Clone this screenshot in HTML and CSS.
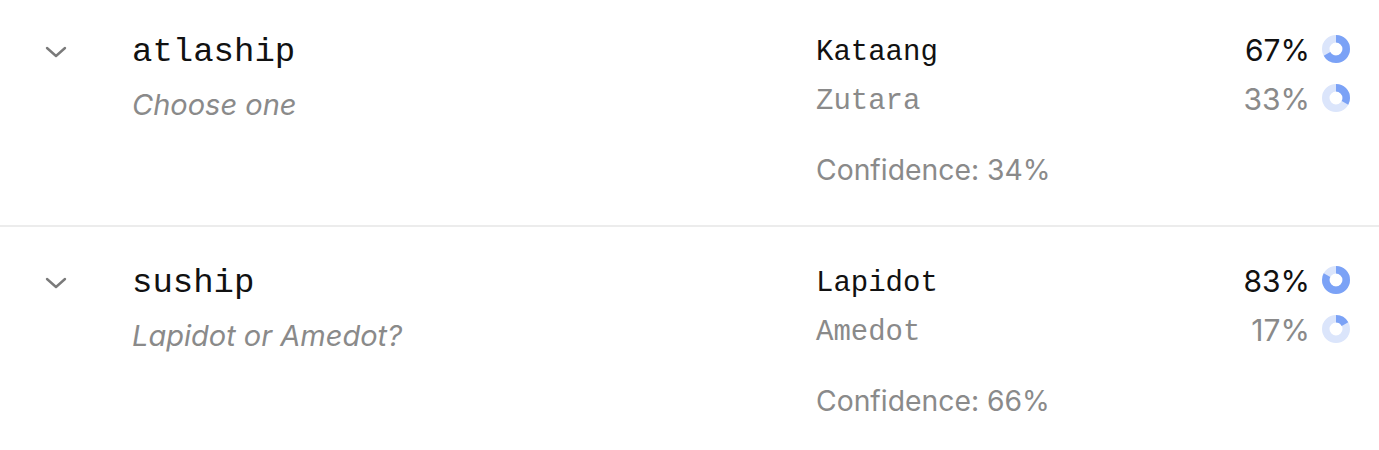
FILE: index.html
```html
<!DOCTYPE html>
<html>
<head>
<meta charset="utf-8">
<link rel="stylesheet" href="styles.css">
</head>
<body>
<div class="list">
  <div class="row">
    <div class="chev"><svg width="22" height="14" viewBox="0 0 22 14"><path d="M2 3 L11 11 L20 3" fill="none" stroke="#7a7a7a" stroke-width="2.4" stroke-linecap="round" stroke-linejoin="round"/></svg></div>
    <div class="main">
      <div class="title">atlaship</div>
      <div class="sub">Choose one</div>
    </div>
    <div class="side">
      <div class="opt top">
        <span class="name">Kataang</span>
        <span class="pct">67%</span>
        <svg class="donut" viewBox="0 0 28 28"><circle cx="14" cy="14" r="10.25" fill="none" stroke="#dbe5fb" stroke-width="7.5"/><circle cx="14" cy="14" r="10.25" fill="none" stroke="#7ba2f6" stroke-width="7.5" pathLength="100" stroke-dasharray="67 100" transform="rotate(-90 14 14)"/></svg>
      </div>
      <div class="opt">
        <span class="name">Zutara</span>
        <span class="pct">33%</span>
        <svg class="donut" viewBox="0 0 28 28"><circle cx="14" cy="14" r="10.25" fill="none" stroke="#dbe5fb" stroke-width="7.5"/><circle cx="14" cy="14" r="10.25" fill="none" stroke="#7ba2f6" stroke-width="7.5" pathLength="100" stroke-dasharray="33 100" transform="rotate(-90 14 14)"/></svg>
      </div>
      <div class="conf">Confidence: 34%</div>
    </div>
  </div>
  <div class="row">
    <div class="chev"><svg width="22" height="14" viewBox="0 0 22 14"><path d="M2 3 L11 11 L20 3" fill="none" stroke="#7a7a7a" stroke-width="2.4" stroke-linecap="round" stroke-linejoin="round"/></svg></div>
    <div class="main">
      <div class="title">suship</div>
      <div class="sub">Lapidot or Amedot?</div>
    </div>
    <div class="side">
      <div class="opt top">
        <span class="name">Lapidot</span>
        <span class="pct">83%</span>
        <svg class="donut" viewBox="0 0 28 28"><circle cx="14" cy="14" r="10.25" fill="none" stroke="#dbe5fb" stroke-width="7.5"/><circle cx="14" cy="14" r="10.25" fill="none" stroke="#7ba2f6" stroke-width="7.5" pathLength="100" stroke-dasharray="83 100" transform="rotate(-90 14 14)"/></svg>
      </div>
      <div class="opt">
        <span class="name">Amedot</span>
        <span class="pct">17%</span>
        <svg class="donut" viewBox="0 0 28 28"><circle cx="14" cy="14" r="10.25" fill="none" stroke="#dbe5fb" stroke-width="7.5"/><circle cx="14" cy="14" r="10.25" fill="none" stroke="#7ba2f6" stroke-width="7.5" pathLength="100" stroke-dasharray="17 100" transform="rotate(-90 14 14)"/></svg>
      </div>
      <div class="conf">Confidence: 66%</div>
    </div>
  </div>
</div>
</body>
</html>
```
FILE: styles.css
```css
html, body {
  margin: 0;
  padding: 0;
  background: #fff;
}
body {
  font-family: Inter, "Noto Sans", sans-serif;
  color: #111;
}
.list {
  margin-top: -4px;
}
.row {
  display: flex;
  align-items: flex-start;
  padding: 36px 29px 38px 45px;
  border-bottom: 2px solid #ececec;
}
.row:last-child {
  border-bottom: none;
}
.chev {
  width: 87px;
  flex: none;
  padding-top: 13px;
}
.chev svg {
  display: block;
}
.main {
  flex: 1;
}
.title {
  font-family: "Liberation Mono", "DejaVu Sans Mono", monospace;
  font-size: 34px;
  line-height: 40px;
  color: #111;
}
.sub {
  font-style: italic;
  font-size: 29px;
  line-height: 34px;
  margin-top: 16px;
  color: #8a8a8a;
}
.side {
  width: 534px;
  flex: none;
  margin-top: -4px;
}
.opt {
  display: flex;
  align-items: center;
  height: 49px;
}
.opt .name {
  flex: 1;
  font-family: "Liberation Mono", "DejaVu Sans Mono", monospace;
  font-size: 29px;
  color: #8a8a8a;
}
.opt.top .name {
  color: #111;
}
.pct {
  font-size: 30px;
  color: #8a8a8a;
  margin-right: 12px;
  margin-bottom: 6px;
}
.opt.top .pct {
  color: #111;
}
.donut {
  width: 28px;
  height: 28px;
  display: block;
  margin-bottom: 8px;
}
.conf {
  margin-top: 27px;
  font-size: 28.3px;
  line-height: 34px;
  color: #8a8a8a;
}
```
